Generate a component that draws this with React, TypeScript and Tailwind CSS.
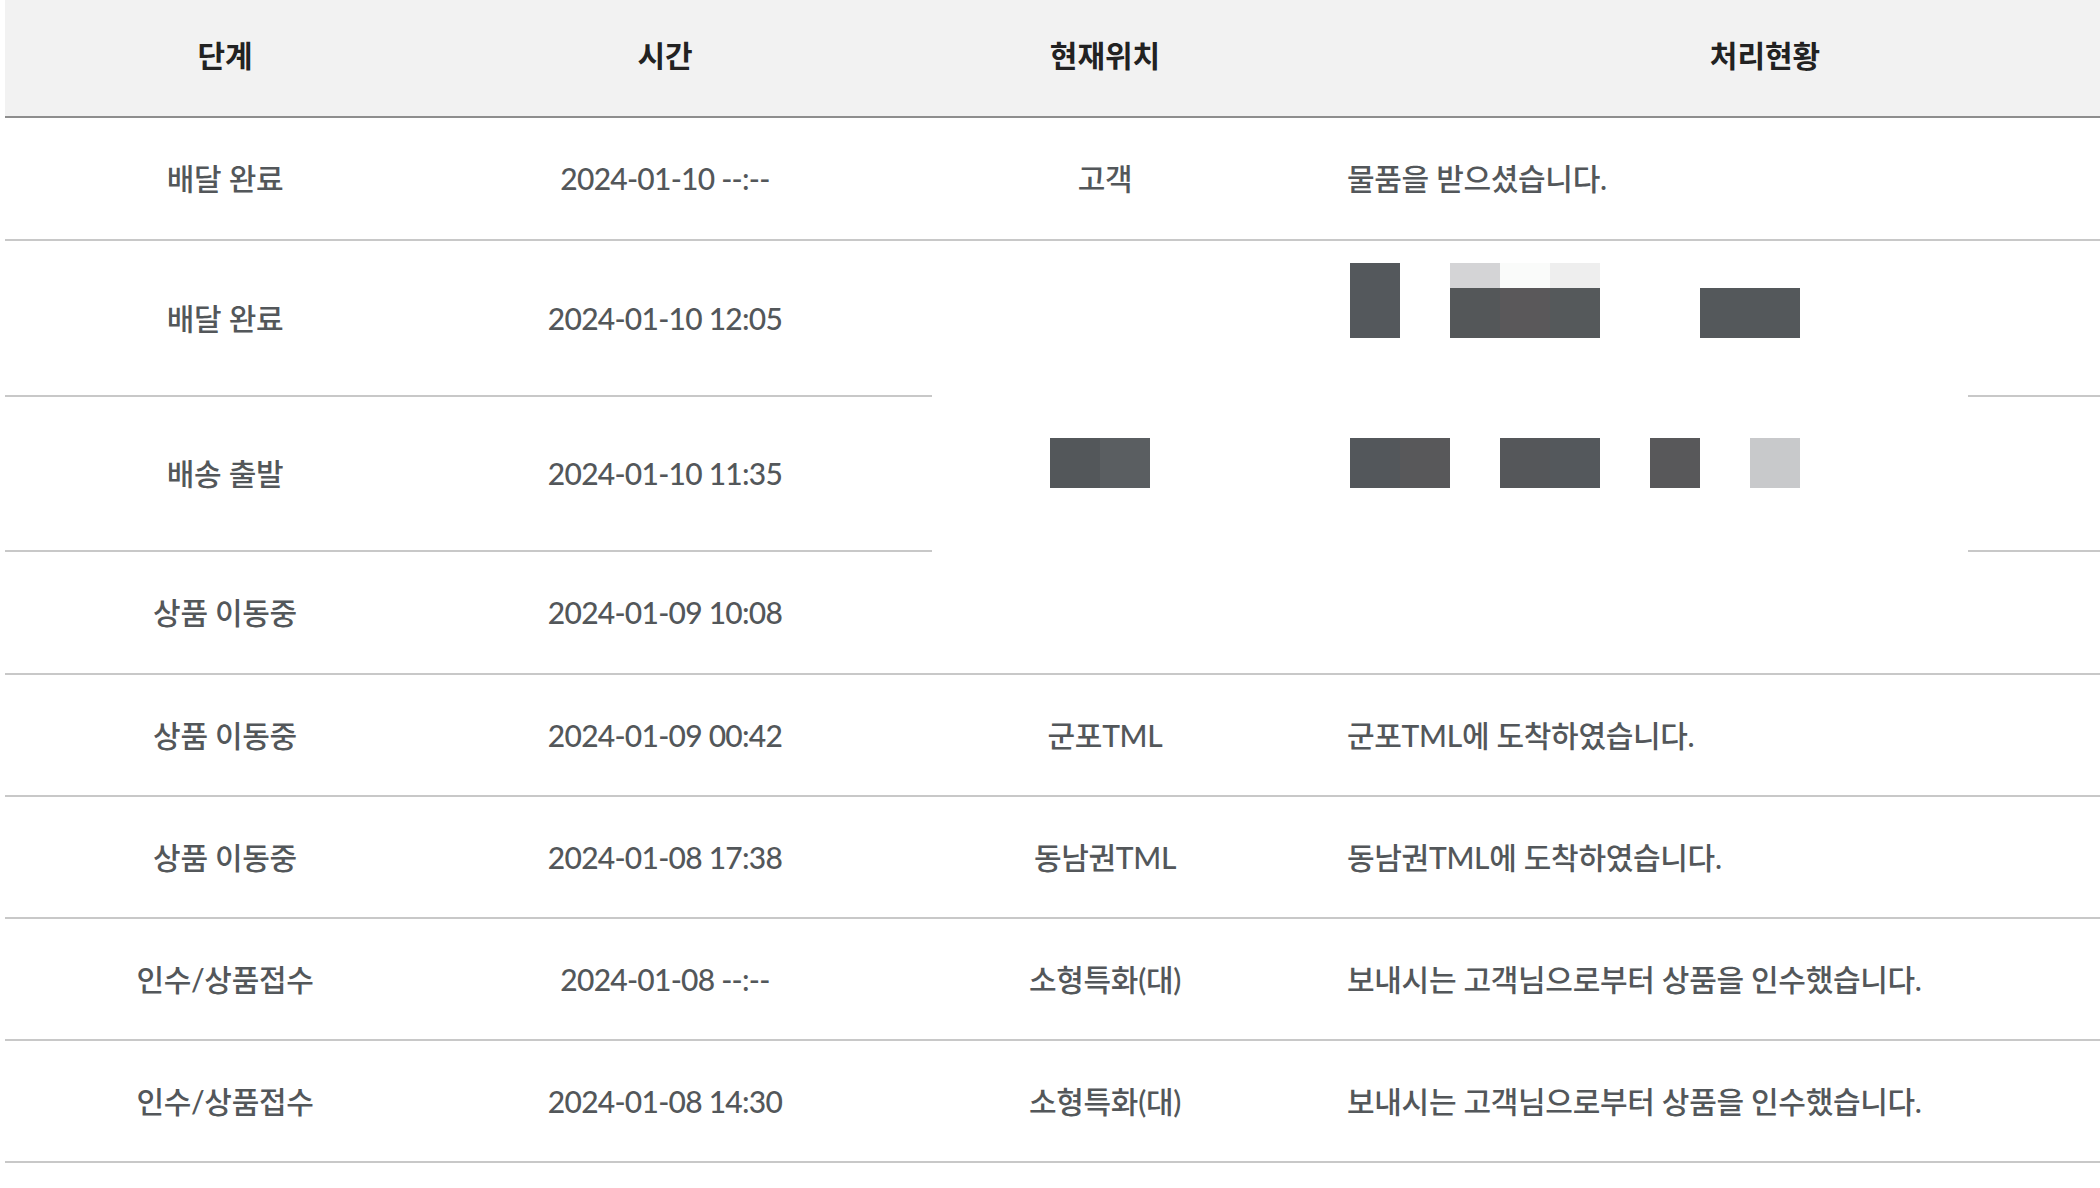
import React from 'react';

interface TrackRow {
  step: string;
  time: string;
  location: string;
  status: string;
  height: string;
}

const rows: TrackRow[] = [
  { step: '배달 완료', time: '2024-01-10 --:--', location: '고객', status: '물품을 받으셨습니다.', height: 'h-[123px]' },
  { step: '배달 완료', time: '2024-01-10 12:05', location: '', status: '', height: 'h-[156px]' },
  { step: '배송 출발', time: '2024-01-10 11:35', location: '', status: '', height: 'h-[155px]' },
  { step: '상품 이동중', time: '2024-01-09 10:08', location: '', status: '', height: 'h-[123px]' },
  { step: '상품 이동중', time: '2024-01-09 00:42', location: '군포TML', status: '군포TML에 도착하였습니다.', height: 'h-[122px]' },
  { step: '상품 이동중', time: '2024-01-08 17:38', location: '동남권TML', status: '동남권TML에 도착하였습니다.', height: 'h-[122px]' },
  { step: '인수/상품접수', time: '2024-01-08 --:--', location: '소형특화(대)', status: '보내시는 고객님으로부터 상품을 인수했습니다.', height: 'h-[122px]' },
  { step: '인수/상품접수', time: '2024-01-08 14:30', location: '소형특화(대)', status: '보내시는 고객님으로부터 상품을 인수했습니다.', height: 'h-[122px]' },
];

// mosaic blocks of the blurred-out area, local to the overlay box
const blocks: [number, number, number, number, string][] = [
  [418, 20, 50, 75, '#54585c'],
  [518, 20, 50, 25, '#d4d4d6'],
  [568, 20, 50, 25, '#fafbfa'],
  [618, 20, 50, 25, '#eeeeee'],
  [518, 45, 50, 50, '#545759'],
  [568, 45, 50, 50, '#5a585a'],
  [618, 45, 50, 50, '#55595b'],
  [768, 45, 100, 50, '#54585b'],
  [118, 195, 50, 50, '#53575a'],
  [168, 195, 50, 50, '#5a5e61'],
  [418, 195, 50, 50, '#53575b'],
  [468, 195, 50, 50, '#58585a'],
  [568, 195, 50, 50, '#55575a'],
  [618, 195, 50, 50, '#54585c'],
  [718, 195, 50, 50, '#58585a'],
  [818, 195, 50, 50, '#c8c9cb'],
];

const font = "font-['Lato','Noto_Sans_CJK_KR',sans-serif]";

const App = () => {
  return (
    <div className={`relative w-full overflow-hidden bg-white pl-[5px] ${font}`}>
      <div className="w-[2200px]">
        <div className="grid h-[118px] grid-cols-[440px_440px_440px_880px] items-center border-b-2 border-[#8e8e8e] bg-[#f2f2f2] pb-[5px] text-[30px] font-bold tracking-[0em] text-[#222]">
          <div className="text-center">단계</div>
          <div className="text-center">시간</div>
          <div className="text-center">현재위치</div>
          <div className="text-center">처리현황</div>
        </div>
        {rows.map((row, index) => (
          <div
            key={`${row.time}-${index}`}
            className={`grid ${row.height} grid-cols-[440px_440px_440px_880px] items-center border-b-2 border-[#c8c8c8] text-[30px] font-medium text-[#53575a]`}
          >
            <div className="text-center tracking-[-0.01em]">{row.step}</div>
            <div className="text-center tracking-[-0.025em]">{row.time}</div>
            <div className="text-center tracking-[-0.01em]">{row.location}</div>
            <div className="pl-[22px] tracking-[-0.01em]">{row.status}</div>
          </div>
        ))}
        <div className="h-[25px]" />
      </div>
      <svg
        className="absolute left-[932px] top-[243px] bg-white"
        width="1036"
        height="430"
        viewBox="0 0 1036 430"
      >
        {blocks.map(([x, y, w, h, c], i) => (
          <rect key={i} x={x} y={y} width={w} height={h} fill={c} />
        ))}
      </svg>
    </div>
  );
};

export default App;
